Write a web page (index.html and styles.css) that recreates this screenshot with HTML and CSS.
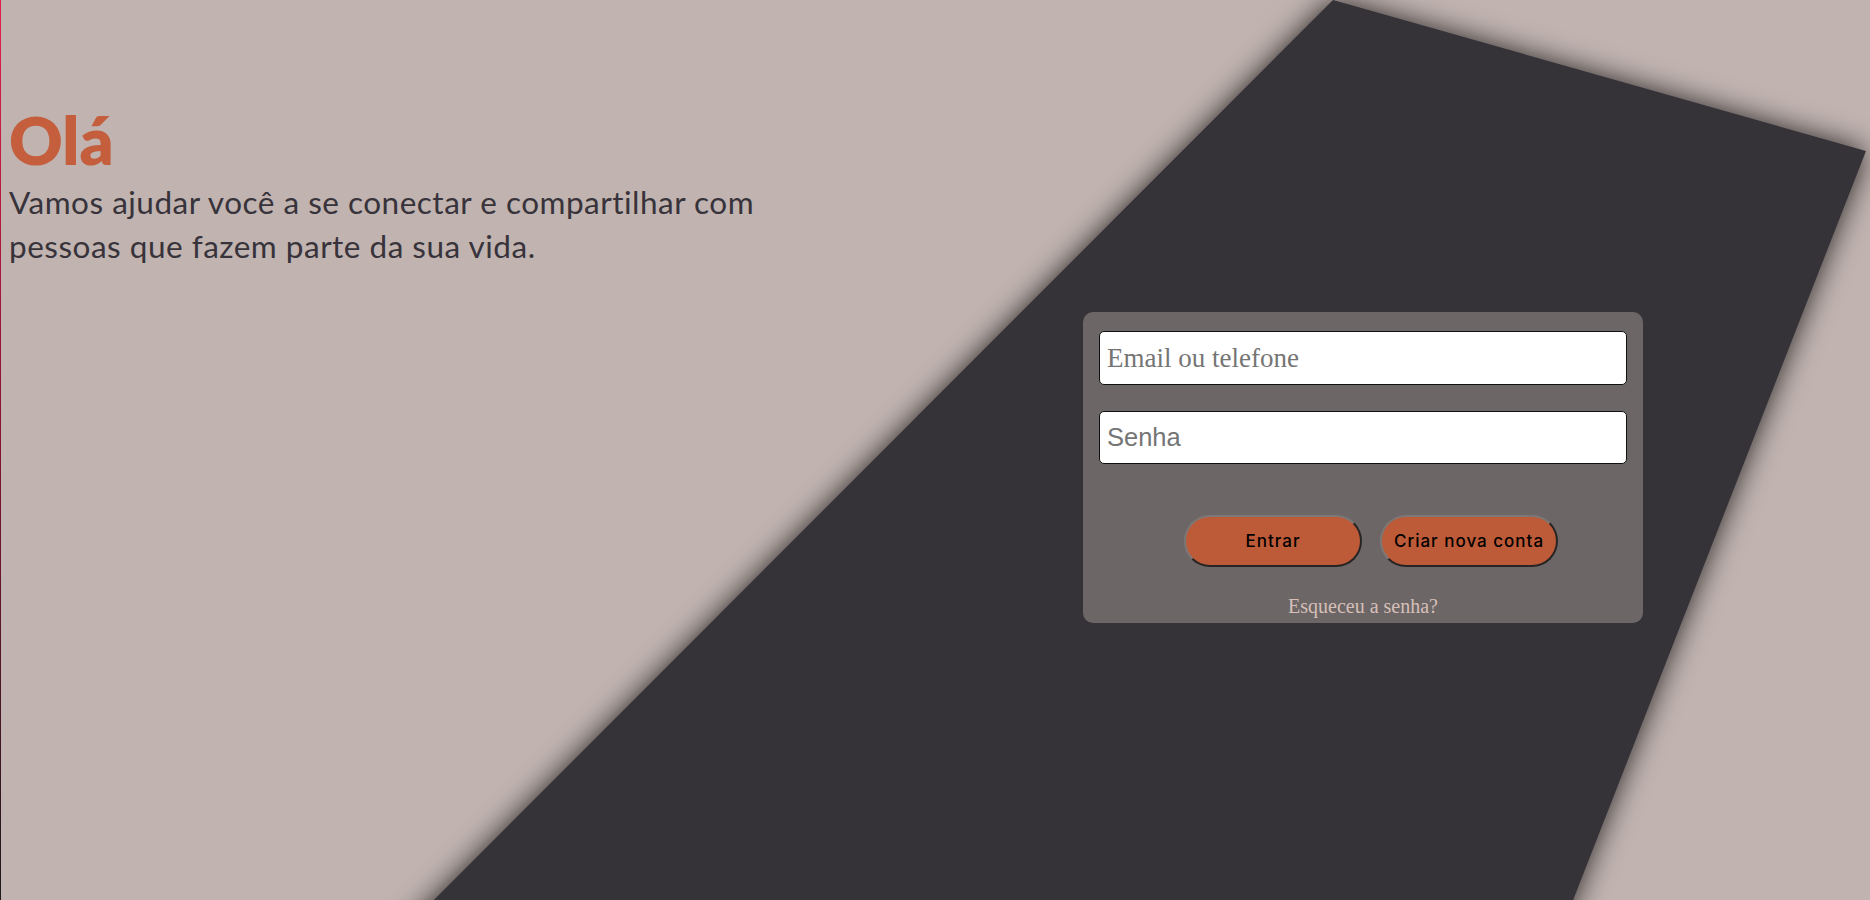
FILE: index.html
```html
<!DOCTYPE html>
<html lang="pt-BR">
<head>
<meta charset="utf-8">
<title>Login</title>
<link rel="stylesheet" href="styles.css">
</head>
<body>
<div class="page">
  <div class="backdrop"><div class="shape"></div></div>
  <main class="layout">
    <section class="intro">
      <h1 class="title">Olá</h1>
      <p class="lead">Vamos ajudar você a se conectar e compartilhar com pessoas que fazem parte da sua vida.</p>
    </section>
    <form class="card">
      <input class="field field-email" type="text" placeholder="Email ou telefone">
      <input class="field field-pass" type="password" placeholder="Senha">
      <div class="actions">
        <button class="btn" type="button">Entrar</button>
        <button class="btn" type="button">Criar nova conta</button>
      </div>
      <a class="forgot" href="#">Esqueceu a senha?</a>
    </form>
  </main>
</div>
</body>
</html>
```
FILE: styles.css
```css
html, body {
  margin: 0;
  height: 100%;
}
body {
  background: #c0b3b0;
  overflow: hidden;
}
.page {
  position: relative;
  height: 100vh;
  box-sizing: border-box;
  border-left: 1px solid transparent;
  border-image: linear-gradient(to bottom, #e3204c, #8c1333 45%, #1c191b) 1;
  overflow: hidden;
}
.backdrop {
  position: absolute;
  inset: 0;
  filter: drop-shadow(0 0 14px rgba(0, 0, 0, 0.8));
  pointer-events: none;
}
.shape {
  width: 100%;
  height: 1000px;
  background: #353238;
  clip-path: polygon(1332px 0, 1865px 151px, 1533px 1000px, 333px 1000px);
}
.layout {
  position: relative;
  display: grid;
  grid-template-columns: 1fr 560px;
  padding-right: 227px;
  height: 100%;
}
.intro {
  padding: 100px 0 0 8px;
  font-family: Lato, "Open Sans", sans-serif;
}
.title {
  margin: 0;
  font-size: 66px;
  line-height: 80px;
  font-weight: 800;
  color: #c45e3c;
}
.lead {
  margin: 0;
  font-size: 31.5px;
  line-height: 44px;
  letter-spacing: 0.5px;
  color: #38333b;
  max-width: 800px;
}
.card {
  align-self: start;
  margin-top: 312px;
  background: #6c6766;
  border-radius: 10px;
  padding: 19px 16px 6px;
  display: flex;
  flex-direction: column;
}
.field {
  height: 54px;
  box-sizing: border-box;
  border: 1px solid #111;
  border-radius: 5px;
  padding: 0 7px;
  font-size: 27px;
  background: #fff;
  outline: none;
}
.field::placeholder {
  color: #757575;
}
.field-email {
  font-family: "Liberation Serif", serif;
  margin-bottom: 26px;
}
.field-pass {
  font-family: "Liberation Sans", Arial, sans-serif;
  font-size: 25.5px;
  height: 53px;
}
.actions {
  display: flex;
  justify-content: center;
  gap: 18px;
  padding-left: 16px;
  margin-top: 51px;
}
.btn {
  width: 178px;
  height: 52px;
  padding: 0;
  border-radius: 26px;
  border: 2px solid;
  border-color: #7d7776 #262424 #262424 #7d7776;
  background: #bd5a38;
  font-family: Inter, "Open Sans", sans-serif;
  font-size: 17px;
  font-weight: 500;
  letter-spacing: 1px;
  color: #000;
}
.forgot {
  margin-top: 28px;
  text-align: center;
  font-family: "Liberation Serif", serif;
  font-size: 20px;
  line-height: 22px;
  color: #d6bfb8;
  text-decoration: none;
}
```
